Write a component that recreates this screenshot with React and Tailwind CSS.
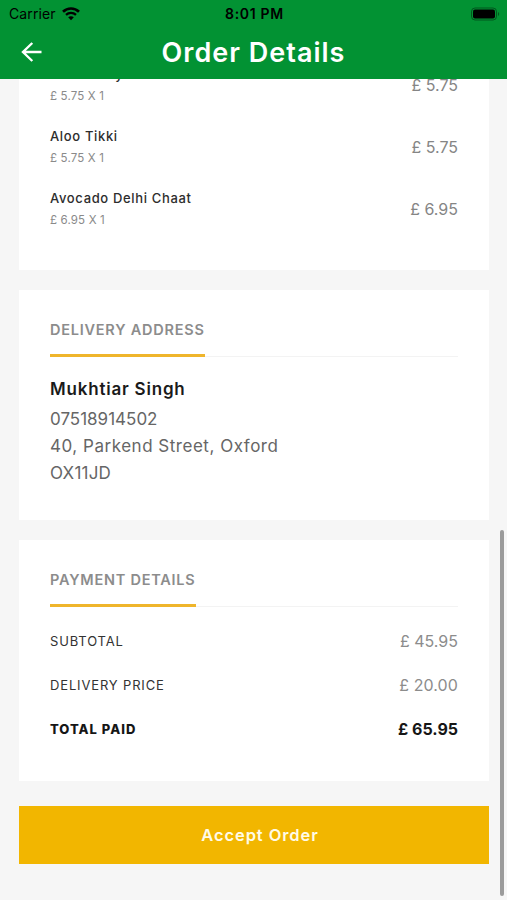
import React from 'react';

const items = [
  { name: 'Aloo Curry', qty: '£ 5.75 X 1', price: '£ 5.75' },
  { name: 'Aloo Tikki', qty: '£ 5.75 X 1', price: '£ 5.75' },
  { name: 'Avocado Delhi Chaat', qty: '£ 6.95 X 1', price: '£ 6.95' },
];

function StatusBar() {
  return (
    <div className="grid grid-cols-3 items-center h-7 pl-[9px] pr-[7px] text-black">
      <div className="flex items-center gap-[6px]">
        <span className="text-[14px] leading-7 tracking-[0.1px]">Carrier</span>
        <svg width="18" height="14" viewBox="0 0 18 14" fill="none" stroke="currentColor">
          <path d="M1 4.7C5.5 0.4 12.5 0.4 17 4.7" strokeWidth="2.7" />
          <path d="M4 7.9C6.8 5.3 11.2 5.3 14 7.9" strokeWidth="2.3" />
          <path d="M9 13.2L6.2 10.3C7.8 8.8 10.2 8.8 11.8 10.3Z" fill="currentColor" stroke="none" />
        </svg>
      </div>
      <span className="text-center text-[14px] leading-7 font-semibold tracking-[0.7px] whitespace-nowrap">8:01 PM</span>
      <svg className="justify-self-end" width="30" height="14" viewBox="0 0 30 14">
        <rect x="1.5" y="1" width="25" height="12" rx="3.5" fill="none" stroke="#000" strokeOpacity="0.4" />
        <rect x="3" y="2.5" width="22" height="9" rx="2" fill="#000" />
        <path d="M28 5v4c1.6-.6 1.6-3.4 0-4z" fill="#000" fillOpacity="0.4" />
      </svg>
    </div>
  );
}

function SectionTitle({ children }) {
  return (
    <div className="flex h-[37px] border-b border-[#f3f3f3]">
      <h2 className="h-[37px] border-b-[3px] border-[#efb52b] text-[14.5px] leading-[20px] font-semibold text-[#8c8c8c] whitespace-nowrap tracking-[0.76px]">
        {children}
      </h2>
    </div>
  );
}

export default function App() {
  return (
    <div className="relative flex flex-col w-[507px] h-[900px] overflow-hidden bg-[#f6f6f6] font-['Inter',sans-serif]">
      {/* Header */}
      <header className="shrink-0 h-[79px] bg-[#029233]">
        <StatusBar />
        <div className="grid grid-cols-[1fr_auto_1fr] items-center h-12 pl-[21px] pr-[21px] text-white">
          <svg width="21" height="20" viewBox="0 0 21 20" fill="none" stroke="currentColor" strokeWidth="2.4">
            <path d="M20.5 10H2M11.3 1L2 10l9.3 9" />
          </svg>
          <h1 className="pt-px text-[27px] leading-[47px] font-semibold tracking-[1px] whitespace-nowrap">Order Details</h1>
        </div>
      </header>

      {/* Scrolled content */}
      <main className="flex-1 min-h-0 overflow-hidden pl-[19px] pr-[18px]">
        <section className="h-[191px] bg-white px-[31px] overflow-hidden">
          <div className="-mt-4">
            {items.map((item, i) => (
              <div key={i} className="flex items-center justify-between h-[62px] pb-[18px]">
                <div>
                  <p className="text-[13px] leading-[22px] font-medium text-[#2d2d2d] tracking-[0.65px]">{item.name}</p>
                  <p className="pt-px text-[11.5px] leading-[21px] text-[#8a8a8a] tracking-[0.15px]">{item.qty}</p>
                </div>
                <span className="text-[16px] text-[#858585]">{item.price}</span>
              </div>
            ))}
          </div>
        </section>

        <section className="mt-5 h-[230px] bg-white px-[31px] pt-[30px]">
          <SectionTitle>DELIVERY ADDRESS</SectionTitle>
          <p className="mt-[19px] text-[17px] leading-[27px] font-semibold text-[#1a1a1a] tracking-[0.8px]">Mukhtiar Singh</p>
          <div className="mt-[3px] text-[17px] leading-[27px] text-[#666]">
            <p>07518914502</p>
            <p className="tracking-[0.52px]">40, Parkend Street, Oxford</p>
            <p className="tracking-[0.2px]">OX11JD</p>
          </div>
        </section>

        <section className="mt-5 h-[241px] bg-white px-[31px] pt-[30px]">
          <SectionTitle>PAYMENT DETAILS</SectionTitle>
          <div className="mt-[12px]">
            <div className="flex items-center justify-between h-11">
              <span className="pt-px text-[13px] text-[#333] tracking-[0.85px]">SUBTOTAL</span>
              <span className="text-[16px] text-[#8c8c8c]">£ 45.95</span>
            </div>
            <div className="flex items-center justify-between h-11">
              <span className="pt-px text-[13px] text-[#333] tracking-[0.85px]">DELIVERY PRICE</span>
              <span className="text-[16px] text-[#8c8c8c] tracking-[0.1px]">£ 20.00</span>
            </div>
            <div className="flex items-center justify-between h-11 font-bold text-[#161616]">
              <span className="pt-px text-[13px] font-extrabold tracking-[1px]">TOTAL PAID</span>
              <span className="text-[16px]">£ 65.95</span>
            </div>
          </div>
        </section>

        <button className="block mt-[25px] w-full h-[58px] pl-[12px] bg-[#f2b600] text-[16.5px] font-semibold text-[#fffbe8] tracking-[0.9px]">
          Accept Order
        </button>
      </main>

      {/* Scroll indicator */}
      <div className="absolute right-[3px] top-[530px] w-1 h-[366px] rounded-full bg-[#9b9b9b]" />
    </div>
  );
}
